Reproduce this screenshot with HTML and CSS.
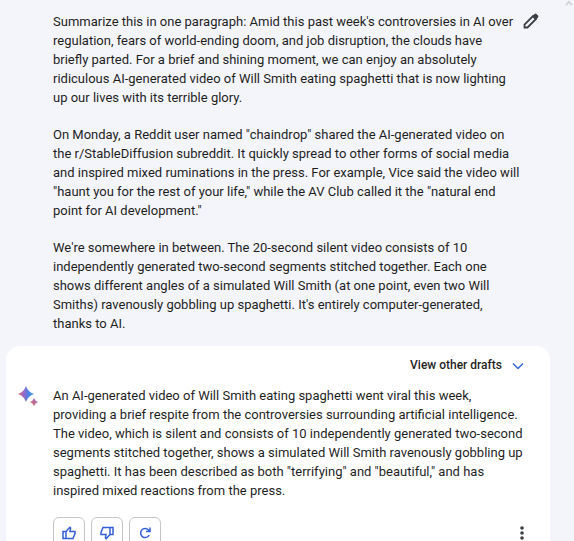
FILE: index.html
```html
<!DOCTYPE html>
<html lang="en">
<head>
<meta charset="utf-8">
<meta name="viewport" content="width=device-width, initial-scale=1">
<title>Conversation</title>
<link rel="stylesheet" href="styles.css">
</head>
<body>
<main class="chat">
  <section class="prompt">
    <div class="prompt-text">
      <p>Summarize this in one paragraph: Amid this past week's controversies in AI over<br>regulation, fears of world-ending doom, and job disruption, the clouds have<br>briefly parted. For a brief and shining moment, we can enjoy an absolutely<br>ridiculous AI-generated video of Will Smith eating spaghetti that is now lighting<br>up our lives with its terrible glory.</p>
      <p>On Monday, a Reddit user named "chaindrop" shared the AI-generated video on<br>the r/StableDiffusion subreddit. It quickly spread to other forms of social media<br>and inspired mixed ruminations in the press. For example, Vice said the video will<br>"haunt you for the rest of your life," while the AV Club called it the "natural end<br>point for AI development."</p>
      <p>We're somewhere in between. The 20-second silent video consists of 10<br>independently generated two-second segments stitched together. Each one<br>shows different angles of a simulated Will Smith (at one point, even two Will<br>Smiths) ravenously gobbling up spaghetti. It's entirely computer-generated,<br>thanks to AI.</p>
    </div>
    <button class="icon-button edit" type="button" aria-label="Edit prompt">
      <svg width="18" height="18" viewBox="-1 -1 18 18"><path d="M1.500 14.500v-3L10 3l3 3-8.500 8.500z" fill="none" stroke="#3c4043" stroke-width="1.800"/><path d="M9 3.500 11.500 1q1-.8 2 0l1.500 1.500q.8 1 0 2L12.500 7z" fill="#3c4043"/></svg>
    </button>
  </section>
  <section class="answer">
    <div class="drafts">
      <button class="drafts-button" type="button">View other drafts
        <svg width="12" height="8" viewBox="0 0 12 8"><path d="M1 1.500 6 6.500l5-5" fill="none" stroke="#3367d6" stroke-width="1.500"/></svg>
      </button>
    </div>
    <div class="reply">
      <svg class="spark" width="22" height="22" viewBox="0 0 22 22" aria-hidden="true">
        <defs>
          <linearGradient id="big"><stop offset="0" stop-color="#e6705f"/><stop offset=".35" stop-color="#9a68c8"/><stop offset=".65" stop-color="#4c83e2"/><stop offset="1" stop-color="#45a5e8"/></linearGradient>
          <linearGradient id="small" x1="0" y1="1" x2="1" y2="0"><stop offset="0" stop-color="#ea6b55"/><stop offset=".5" stop-color="#bd6797"/><stop offset="1" stop-color="#7b70d8"/></linearGradient>
        </defs>
        <path d="M9 0q2 6 8 8-6 2-8 8-2-6-8-8 6-2 8-8z" fill="url(#big)"/>
        <path d="M17 12q1 3 4 4-3 1-4 4-1-3-4-4 3-1 4-4z" fill="url(#small)"/>
      </svg>
      <p>An AI-generated video of Will Smith eating spaghetti went viral this week,<br>providing a brief respite from the controversies surrounding artificial intelligence.<br>The video, which is silent and consists of 10 independently generated two-second<br>segments stitched together, shows a simulated Will Smith ravenously gobbling up<br>spaghetti. It has been described as both "terrifying" and "beautiful," and has<br>inspired mixed reactions from the press.</p>
    </div>
    <div class="actions">
      <button class="action" type="button" aria-label="Good response">
        <svg width="14" height="14" viewBox="0 0 14 14"><path d="M1 5.500h3v7H1zM4 5.500 7.800 1.300l.8.800-.6 3.400h5v2l-2 5H4" fill="none" stroke="#3560d4" stroke-width="1.500"/></svg>
      </button>
      <button class="action" type="button" aria-label="Bad response">
        <svg width="14" height="14" viewBox="0 0 14 14"><path d="M13 8.500h-3v-7h3zM10 8.500l-3.800 4.200-.8-.8.6-3.400H1v-2l2-5h7" fill="none" stroke="#3560d4" stroke-width="1.500"/></svg>
      </button>
      <button class="action" type="button" aria-label="Regenerate">
        <svg width="14" height="14" viewBox="0 0 14 14"><path d="M11.200 9A4.500 4.500 0 1 1 10.500 4L12 5.500M12 1.500v4H8" fill="none" stroke="#3560d4" stroke-width="1.500"/></svg>
      </button>
      <button class="icon-button more" type="button" aria-label="More options">
        <svg width="4" height="14" viewBox="0 0 4 14" fill="#3c4043"><circle cx="2" cy="2" r="1.800"/><circle cx="2" cy="7" r="1.800"/><circle cx="2" cy="12" r="1.800"/></svg>
      </button>
    </div>
  </section>
</main>
<div class="scroll-hint" aria-hidden="true"><svg width="8" height="6" viewBox="0 0 8 6"><path d="M1 5 4 2l3 3" fill="none" stroke="#d5d6dc" stroke-width="2"/></svg></div>
</body>
</html>
```
FILE: styles.css
```css
* {
  box-sizing: border-box;
}

body {
  margin: 0;
  height: 100vh;
  overflow: hidden;
  background: #f4f5fb;
  color: #1f1f1f;
  font: 13px/19px Roboto, "Liberation Sans", sans-serif;
}

p {
  margin: 0;
  white-space: nowrap;
}

button {
  padding: 0;
  border: 0;
  background: none;
  color: inherit;
  font: inherit;
}

svg {
  display: block;
}

.chat {
  padding: 12px 24px 0 6px;
}

.prompt {
  display: flex;
  justify-content: space-between;
  align-items: flex-start;
  padding: 0 10px 13px 47px;
}

.prompt-text {
  display: grid;
  gap: 18px;
}

.answer {
  padding: 10px 24px 24px 11px;
  border-radius: 14px;
  background: #fff;
}

.drafts {
  display: flex;
  justify-content: flex-end;
}

.drafts-button {
  display: flex;
  align-items: center;
  gap: 10px;
  padding-right: 2px;
  font-size: 12px;
  font-weight: 500;
}

.reply {
  display: flex;
  gap: 14px;
  padding-top: 11px;
}

.spark {
  flex: none;
}

.actions {
  display: flex;
  align-items: center;
  gap: 6px;
  padding: 17px 0 0 36px;
}

.action {
  display: grid;
  place-items: center;
  width: 32px;
  height: 32px;
  border: 1px solid #c4c7c5;
  border-radius: 6px;
  background: #fff;
}

.more {
  margin-left: auto;
  padding-right: 2px;
}

.scroll-hint {
  position: absolute;
  top: 0;
  right: 1px;
}
```
